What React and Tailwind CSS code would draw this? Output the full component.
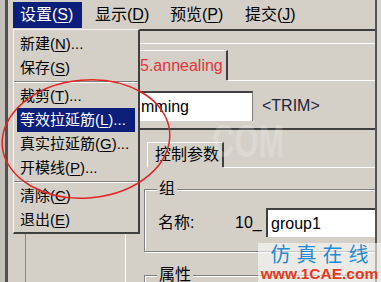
import React from 'react';

const FONT = "font-['Liberation_Sans','Noto_Sans_CJK_SC',sans-serif]";

const barItems = [
  { t: '设置', k: 'S', active: true },
  { t: '显示', k: 'D' },
  { t: '预览', k: 'P' },
  { t: '提交', k: 'J' },
];

const menuItems = [
  { t: '新建', k: 'N', tail: '...' },
  { t: '保存', k: 'S' },
  { sep: true },
  { t: '裁剪', k: 'T', tail: '...' },
  { t: '等效拉延筋', k: 'L', tail: '...', active: true },
  { t: '真实拉延筋', k: 'G', tail: '...' },
  { t: '开模线', k: 'P', tail: '...' },
  { sep: true },
  { t: '清除', k: 'C' },
  { t: '退出', k: 'E' },
];

function Mnemonic({ t, k, tail = '' }) {
  return (
    <span className="whitespace-nowrap">
      {t}(<span className="underline underline-offset-[2px]">{k}</span>){tail}
    </span>
  );
}

export default function App() {
  return (
    <div className={`relative w-[381px] h-[282px] overflow-hidden bg-[#d4d0c8] flex ${FONT} text-[15px] leading-[18px] text-black`}>
      {/* left window frame */}
      <div className="w-[13px] shrink-0 flex">
        <div className="w-[5px] bg-[#c4c1ba]" />
        <div className="w-[3px] bg-[#505050]" />
        <div className="flex-1" />
      </div>

      <div className="w-[362px] shrink-0 flex flex-col">
        {/* menu bar */}
        <div className="h-[29px] shrink-0 flex items-start pt-[2px] gap-[6px]">
          {barItems.map((b) => (
            <div
              key={b.t}
              className={`w-[69px] h-[26px] px-[7px] flex items-center text-[16px] ${b.active ? 'bg-[#0b1f7a] text-white' : ''}`}
            >
              <Mnemonic t={b.t} k={b.k} />
            </div>
          ))}
        </div>
        <div className="h-[2px] shrink-0 bg-[#3c3c3c]" />

        {/* upper tab area */}
        <div className="h-[12px] shrink-0" />
        <div className="h-px shrink-0 bg-white" />
        <div className="h-[6px] shrink-0" />
        <div className="h-[30px] shrink-0 flex">
          <div className="w-[125px]" />
          <div className="w-[90px] border-t border-t-white border-r-2 border-r-[#404040] pl-[2px] flex items-center text-[16px] text-[#e3343a]">
            5.annealing
          </div>
        </div>
        <div className="h-px shrink-0 flex">
          <div className="w-[215px]" />
          <div className="flex-1 bg-white" />
        </div>
        <div className="h-[47px] shrink-0 pt-[10px] flex items-start">
          <div className="w-[123px]" />
          <div className="w-[117px] h-[30px] bg-white border-t-2 border-t-[#404040] border-r border-r-[#808080] pl-[5px] flex items-center text-[16px]">
            mming
          </div>
          <div className="h-[30px] ml-[9px] flex items-center text-[16px] text-[#22223a]">&lt;TRIM&gt;</div>
        </div>
        <div className="h-[2px] shrink-0 bg-[#404040]" />

        {/* lower area */}
        <div className="flex-1 min-h-0 overflow-hidden flex">
          <div className="w-[130px] flex">
            <div className="w-[12px]" />
            <div className="w-[101px] border-l border-l-[#8a8780] border-r border-r-white" />
            <div className="flex-1" />
          </div>

          <div className="w-[232px] overflow-hidden flex flex-col">
            <div className="h-[12px] shrink-0" />
            <div className="h-[25px] shrink-0 flex">
              <div className="w-[4px]" />
              <div className="w-[77px] border-l border-t border-white border-r-2 border-r-[#404040] pl-[7px] flex items-center text-[16px]">
                控制参数
              </div>
            </div>
            <div className="h-px shrink-0 flex">
              <div className="w-[81px]" />
              <div className="flex-1 bg-white" />
            </div>

            <fieldset className="shrink-0 mt-[12px] ml-[1px] w-[250px] border border-[#808080] shadow-[inset_1px_1px_0_#fff,1px_1px_0_#fff] pb-[14px]">
              <legend className="ml-[12px] px-[2px] bg-[#d4d0c8] text-[16px]">组</legend>
              <div className="mt-[10px] h-[29px] pl-[13px] flex items-center">
                <span className="w-[77px] text-[16px]">名称:</span>
                <span className="w-[31px] text-[16px]">10_</span>
                <div className="flex-1 h-[29px] bg-white border-t-2 border-l-2 border-[#404040] pl-[3px] flex items-center text-[16px]">
                  group1
                </div>
              </div>
            </fieldset>

            <fieldset className="shrink-0 mt-[15px] ml-[1px] w-[250px] h-[40px] border border-[#808080] shadow-[inset_1px_1px_0_#fff,1px_1px_0_#fff]">
              <legend className="ml-[12px] px-[2px] bg-[#d4d0c8] text-[16px] leading-[16px]">属性</legend>
            </fieldset>
          </div>
        </div>
      </div>

      {/* right window frame */}
      <div className="w-[6px] shrink-0 border-l-2 border-l-[#555] bg-[#d8d5cf]" />

      {/* faint site watermark */}
      <span className="absolute left-[212px] top-[117px] origin-left scale-x-[0.66] text-[47px] leading-none font-bold text-white/20 pointer-events-none">
        COM
      </span>

      {/* open dropdown menu */}
      <div className="absolute left-[13px] top-[29px] w-[127px] h-[205px] bg-[#d4d0c8] border-l border-t border-l-[#f4f4f4] border-t-[#f4f4f4] border-r-2 border-b-2 border-r-[#404040] border-b-[#404040] pt-[2px] px-[3px]">
        {menuItems.map((m, i) =>
          m.sep ? (
            <div key={i} className="h-[4px] -mx-[3px] flex items-center">
              <div className="w-full border-t border-t-[#808080] border-b border-b-white" />
            </div>
          ) : (
            <div
              key={i}
              className={`h-[24px] pl-[3px] flex items-center ${m.active ? 'bg-[#0b1f7a] text-white' : ''}`}
            >
              <Mnemonic t={m.t} k={m.k} tail={m.tail} />
            </div>
          )
        )}
      </div>

      {/* red annotation ellipse */}
      <svg className="absolute left-0 top-0 pointer-events-none" width="381" height="282" viewBox="0 0 381 282">
        <ellipse cx="86" cy="139" rx="84" ry="59" fill="none" stroke="#e42424" strokeWidth="1.5" transform="rotate(-5 86 139)" />
      </svg>

      {/* corner logo watermark */}
      <div className="absolute right-0 bottom-0 w-[123px] h-[39px] bg-white/55 flex flex-col items-center pointer-events-none">
        <span className="text-[20px] leading-[24px] tracking-[6px] pl-[6px] text-[#1f8ad2]">仿真在线</span>
        <span className="text-[15.5px] leading-[14px] font-bold text-[#e6371c]">www.1CAE.com</span>
      </div>
    </div>
  );
}
